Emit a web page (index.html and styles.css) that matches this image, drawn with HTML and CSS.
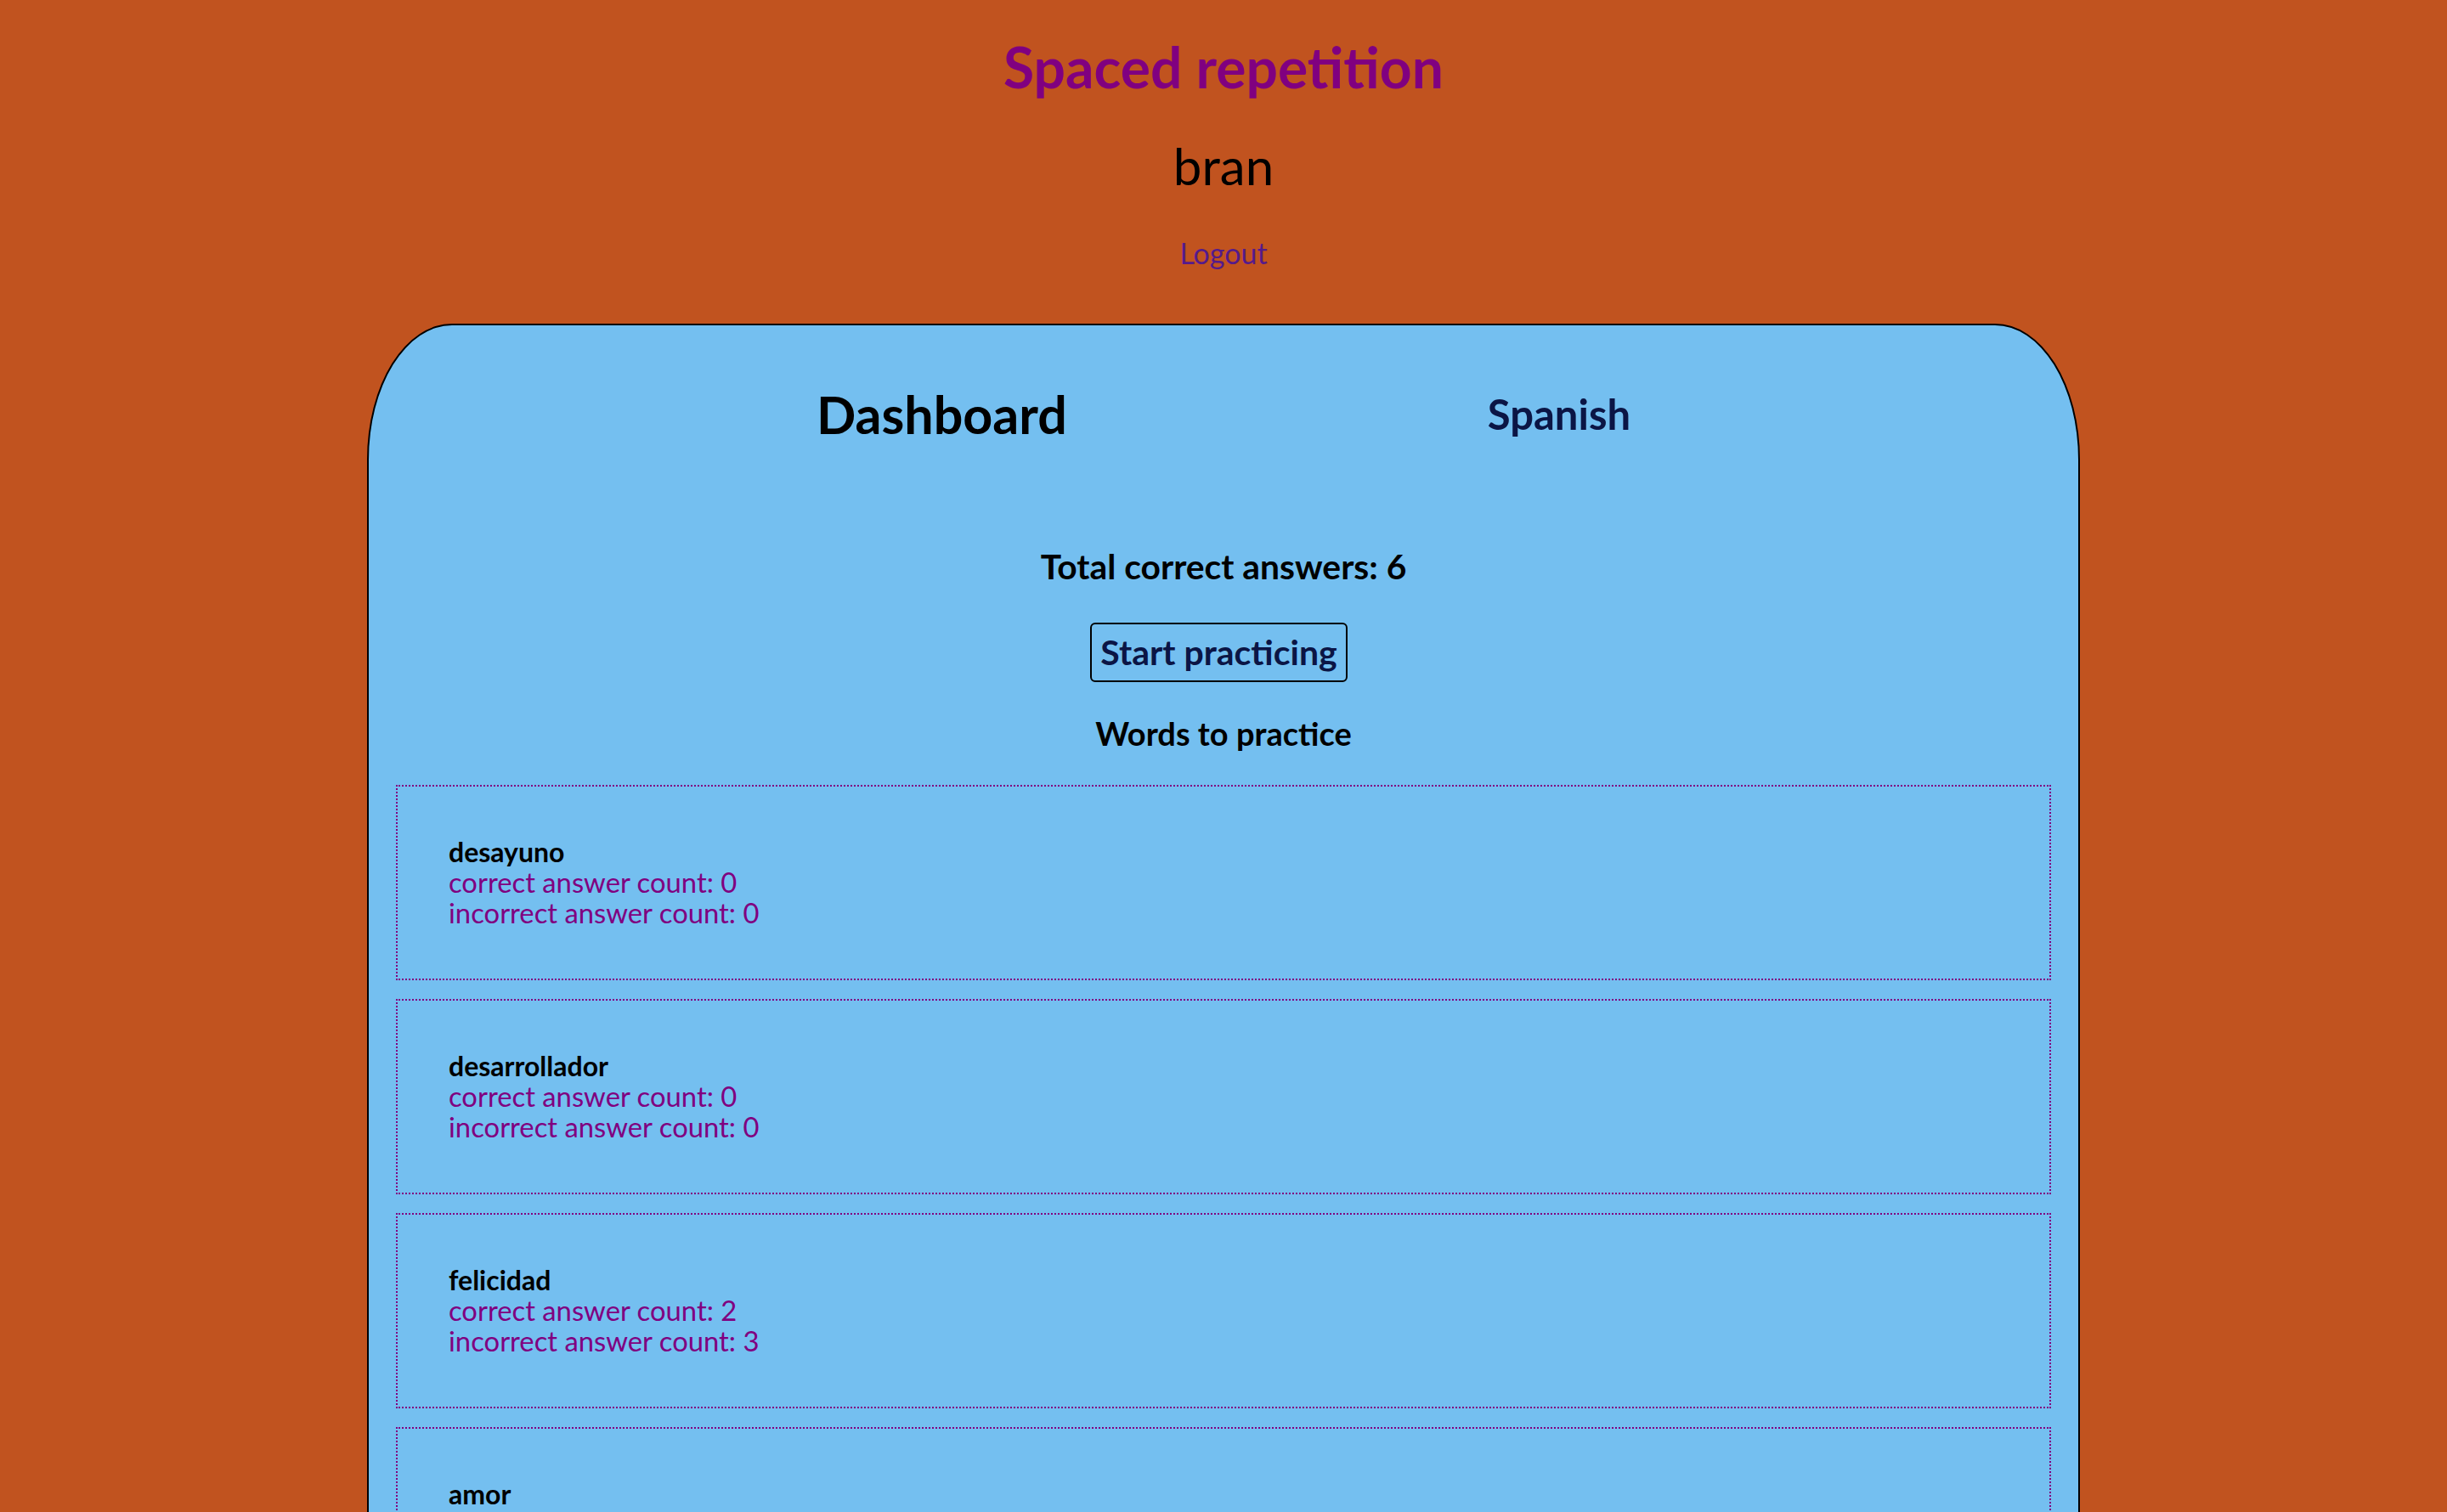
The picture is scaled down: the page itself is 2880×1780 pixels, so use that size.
FILE: index.html
```html
<!DOCTYPE html>
<html lang="en">
<head>
<meta charset="utf-8">
<title>Spaced repetition</title>
<link rel="stylesheet" href="styles.css">
</head>
<body>
<header class="top">
  <h1 class="app-title">Spaced repetition</h1>
  <h2 class="user-name">bran</h2>
  <a class="logout" href="#">Logout</a>
</header>
<main class="card">
  <div class="card-head">
    <h2 class="dash-title">Dashboard</h2>
    <h3 class="lang-title">Spanish</h3>
  </div>
  <p class="total">Total correct answers: 6</p>
  <div class="start-row"><button class="start-btn">Start practicing</button></div>
  <h4 class="words-title">Words to practice</h4>
  <ul class="word-list">
    <li class="word">
      <div class="word-name">desayuno</div>
      <div class="word-stat">correct answer count: 0</div>
      <div class="word-stat">incorrect answer count: 0</div>
    </li>
    <li class="word">
      <div class="word-name">desarrollador</div>
      <div class="word-stat">correct answer count: 0</div>
      <div class="word-stat">incorrect answer count: 0</div>
    </li>
    <li class="word">
      <div class="word-name">felicidad</div>
      <div class="word-stat">correct answer count: 2</div>
      <div class="word-stat">incorrect answer count: 3</div>
    </li>
    <li class="word">
      <div class="word-name">amor</div>
      <div class="word-stat">correct answer count: 0</div>
      <div class="word-stat">incorrect answer count: 0</div>
    </li>
  </ul>
</main>
</body>
</html>
```
FILE: styles.css
```css
html, body {
  margin: 0;
  padding: 0;
}
body {
  background: #c1531f;
  font-family: Lato, "Open Sans", sans-serif;
  color: #000;
  padding-bottom: 120px;
}
.top {
  display: flex;
  flex-direction: column;
  align-items: center;
  text-align: center;
}
.app-title {
  margin: 41px 0 0;
  font-size: 66px;
  line-height: 76px;
  font-weight: 700;
  color: #800080;
}
.user-name {
  margin: 49px 0 0;
  font-size: 60px;
  line-height: 58px;
  font-weight: 400;
  color: #000;
}
.logout {
  margin-top: 55px;
  font-size: 34px;
  line-height: 38px;
  color: #551a8b;
  text-decoration: none;
}
.card {
  display: block;
  width: 70%;
  box-sizing: border-box;
  margin: 64px auto 0;
  padding: 0 32px 40px;
  background: #74bff0;
  border: 2px solid #000;
  border-radius: 100px / 160px;
}
.card-head {
  display: flex;
  justify-content: space-evenly;
  align-items: center;
  height: 212px;
}
.dash-title {
  margin: 0 0 2px;
  font-size: 61px;
  line-height: 76px;
  font-weight: 700;
}
.lang-title {
  margin: 0 0 5px;
  font-size: 49px;
  line-height: 58px;
  font-weight: 700;
  color: #0b1545;
}
.total {
  margin: 50px 0 0;
  text-align: center;
  font-size: 40.8px;
  line-height: 44px;
  font-weight: 700;
}
.start-row {
  display: flex;
  justify-content: center;
  margin-top: 44px;
}
.start-btn {
  font-family: inherit;
  font-size: 41px;
  line-height: 44px;
  font-weight: 700;
  color: #0b1545;
  background: transparent;
  border: 2px solid #000;
  border-radius: 6px;
  padding: 11px 10px;
  margin-right: 11px;
}
.words-title {
  margin: 38px 0 0;
  text-align: center;
  font-size: 38px;
  line-height: 44px;
  font-weight: 700;
}
.word-list {
  list-style: none;
  margin: 39px 0 0;
  padding: 0;
  display: flex;
  flex-direction: column;
  gap: 22px;
}
.word {
  border: 2px dotted #800080;
  padding: 59px 60px;
  font-size: 32.8px;
  line-height: 36px;
}
.word-name {
  font-size: 32px;
  font-weight: 700;
  color: #000;
}
.word-stat {
  color: #800080;
}
```
